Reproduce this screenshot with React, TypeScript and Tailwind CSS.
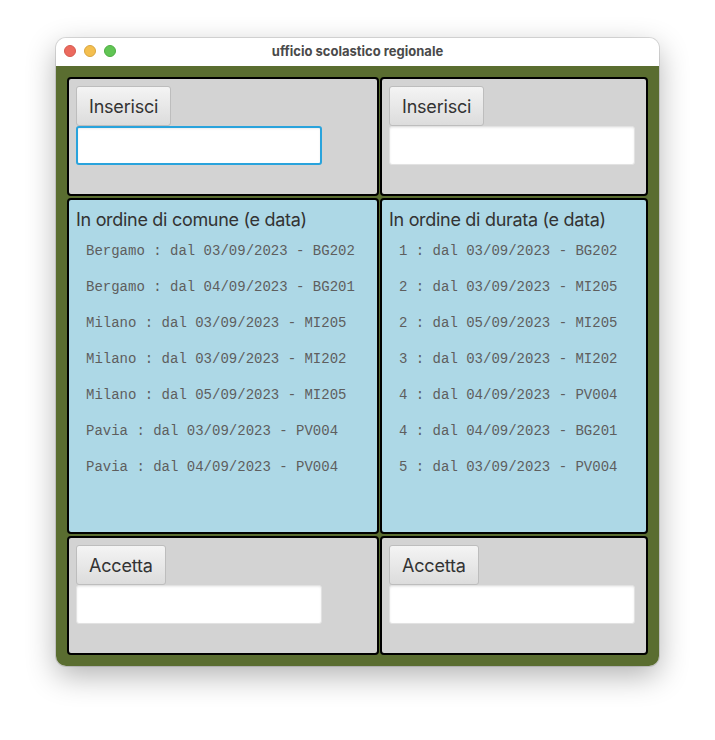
const comune = [
  'Bergamo : dal 03/09/2023 - BG202',
  'Bergamo : dal 04/09/2023 - BG201',
  'Milano : dal 03/09/2023 - MI205',
  'Milano : dal 03/09/2023 - MI202',
  'Milano : dal 05/09/2023 - MI205',
  'Pavia : dal 03/09/2023 - PV004',
  'Pavia : dal 04/09/2023 - PV004',
];

const durata = [
  '1 : dal 03/09/2023 - BG202',
  '2 : dal 03/09/2023 - MI205',
  '2 : dal 05/09/2023 - MI205',
  '3 : dal 03/09/2023 - MI202',
  '4 : dal 04/09/2023 - PV004',
  '4 : dal 04/09/2023 - BG201',
  '5 : dal 03/09/2023 - PV004',
];

const sans = "font-['Inter','Liberation_Sans',sans-serif]";

function Button({ label }: { label: string }) {
  return (
    <button
      className={`h-[40px] px-[12px] rounded-[3px] border border-[#bdbdbd] bg-gradient-to-b from-[#f4f4f4] to-[#dcdcdc] text-[18px] text-[#333] tracking-[-0.2px] ${sans} self-start`}
    >
      {label}
    </button>
  );
}

function Field({ focused }: { focused?: boolean }) {
  return (
    <div
      className={
        focused
          ? 'h-[39px] w-[246px] rounded-[3px] bg-white border-2 border-[#29a3dc] shadow-[inset_0_1px_2px_rgba(0,0,0,0.08)]'
          : 'h-[39px] w-[246px] rounded-[3px] bg-white border border-[#e2e2e2] shadow-[inset_0_1px_2px_rgba(0,0,0,0.08)]'
      }
    />
  );
}

function InputPanel({ label, focused }: { label: string; focused?: boolean }) {
  return (
    <div className="flex flex-col rounded-[4px] border-2 border-black bg-[#d3d3d3] p-[7px]">
      <Button label={label} />
      <Field focused={focused} />
    </div>
  );
}

function ListPanel({ title, rows }: { title: string; rows: string[] }) {
  return (
    <div className="flex flex-col rounded-[4px] border-2 border-black bg-[#add8e6] px-[7px] pt-[8px]">
      <h2 className={`text-[18px] leading-[24px] text-[#333] tracking-[-0.3px] ${sans}`}>{title}</h2>
      <ul className="mt-[11px] pl-[10px] flex flex-col">
        {rows.map((r, i) => (
          <li
            key={i}
            className="h-[36px] font-['Liberation_Mono',monospace] text-[14px] leading-[16px] text-[#5e5e5e] whitespace-pre"
          >
            {r}
          </li>
        ))}
      </ul>
    </div>
  );
}

export default function App() {
  return (
    <div className="min-h-[740px] w-[715px] bg-white pt-[38px] pl-[56px]">
      <div className="w-[603px] h-[628px] rounded-[10px] overflow-hidden flex flex-col shadow-[0_10px_30px_rgba(0,0,0,0.3),0_0_0_1px_rgba(0,0,0,0.12)]">
        {/* Title bar */}
        <div className="relative h-[28px] bg-white flex items-center justify-center shrink-0">
          <div className="absolute left-[8px] top-[7px] flex gap-[8px]">
            <span className="w-[12px] h-[12px] rounded-full bg-[#ec6a5e] border border-[#d55a4f]" />
            <span className="w-[12px] h-[12px] rounded-full bg-[#f4bf4f] border border-[#d8a63f]" />
            <span className="w-[12px] h-[12px] rounded-full bg-[#61c554] border border-[#4ead43]" />
          </div>
          <span className={`text-[13px] font-bold text-[#4a4a4a] ${sans}`}>ufficio scolastico regionale</span>
        </div>

        {/* Content */}
        <div className="flex-1 bg-[#5a6d30] pt-[11px] pl-[11px]">
          <div className="grid grid-cols-[312px_268px] grid-rows-[119px_336px_119px] gap-x-[1px] gap-y-[2px]">
            <InputPanel label="Inserisci" focused />
            <InputPanel label="Inserisci" />
            <ListPanel title="In ordine di comune (e data)" rows={comune} />
            <ListPanel title="In ordine di durata (e data)" rows={durata} />
            <InputPanel label="Accetta" />
            <InputPanel label="Accetta" />
          </div>
        </div>
      </div>
    </div>
  );
}
